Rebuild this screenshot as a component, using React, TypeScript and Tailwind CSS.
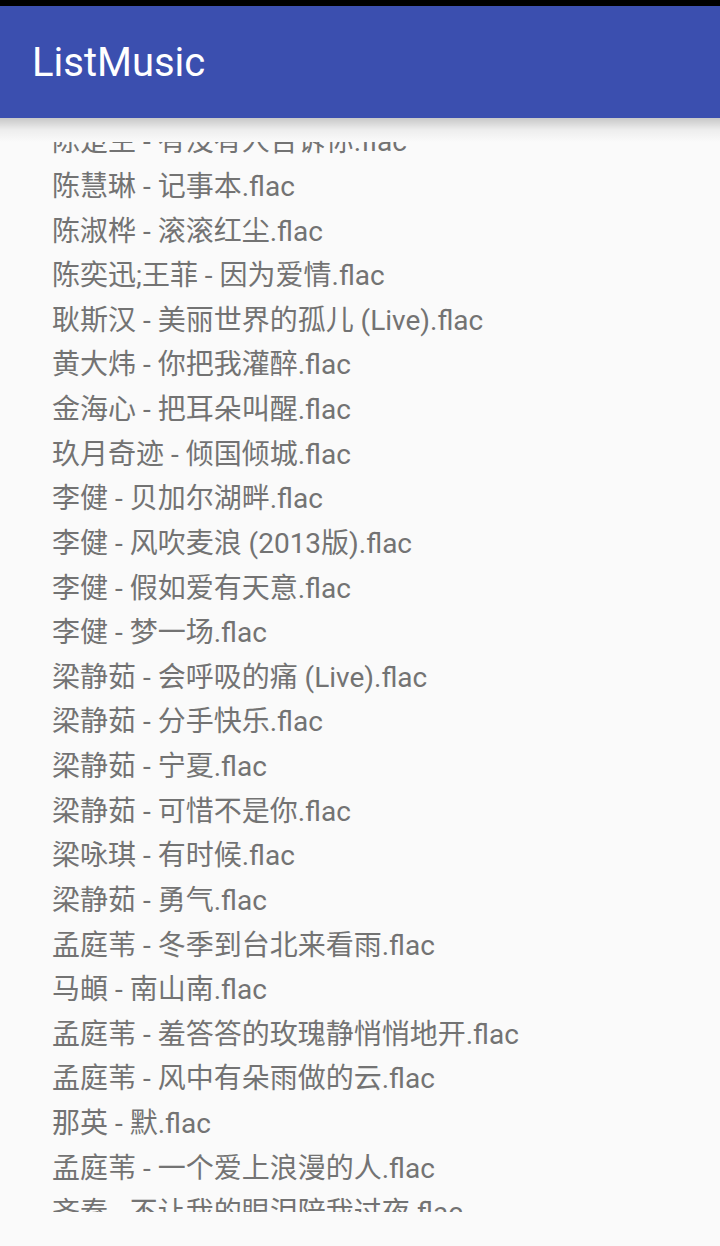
const songs = [
  "陈楚生 - 有没有人告诉你.flac",
  "陈慧琳 - 记事本.flac",
  "陈淑桦 - 滚滚红尘.flac",
  "陈奕迅;王菲 - 因为爱情.flac",
  "耿斯汉 - 美丽世界的孤儿 (Live).flac",
  "黄大炜 - 你把我灌醉.flac",
  "金海心 - 把耳朵叫醒.flac",
  "玖月奇迹 - 倾国倾城.flac",
  "李健 - 贝加尔湖畔.flac",
  "李健 - 风吹麦浪 (2013版).flac",
  "李健 - 假如爱有天意.flac",
  "李健 - 梦一场.flac",
  "梁静茹 - 会呼吸的痛 (Live).flac",
  "梁静茹 - 分手快乐.flac",
  "梁静茹 - 宁夏.flac",
  "梁静茹 - 可惜不是你.flac",
  "梁咏琪 - 有时候.flac",
  "梁静茹 - 勇气.flac",
  "孟庭苇 - 冬季到台北来看雨.flac",
  "马頔 - 南山南.flac",
  "孟庭苇 - 羞答答的玫瑰静悄悄地开.flac",
  "孟庭苇 - 风中有朵雨做的云.flac",
  "那英 - 默.flac",
  "孟庭苇 - 一个爱上浪漫的人.flac",
  "齐秦 - 不让我的眼泪陪我过夜.flac",
];

export default function App() {
  return (
    <div className="flex h-[1246px] w-[720px] flex-col bg-[#fafafa] font-['Roboto','Noto_Sans_CJK_SC',sans-serif]">
      {/* status bar */}
      <div className="h-[6px] shrink-0 bg-black" />

      {/* app bar */}
      <div className="relative z-10 flex h-[112px] shrink-0 items-center bg-[#3b4faf] pt-[2px] pl-[32px]">
        <h1 className="text-[40px] leading-none text-white">ListMusic</h1>
        <div className="absolute inset-x-0 top-full h-[24px] bg-gradient-to-b from-black/20 via-black/5 to-transparent" />
      </div>

      {/* song list */}
      <div className="flex min-h-0 flex-1 flex-col pt-[24px] pb-[34px]">
        <div className="flex-1 overflow-hidden">
          <ul className="-mt-[22px] pl-[52px]">
            {songs.map((song) => (
              <li
                key={song}
                className="flex h-[44.64px] items-center whitespace-nowrap text-[28px] leading-none text-[#737373]"
              >
                {song}
              </li>
            ))}
          </ul>
        </div>
      </div>
    </div>
  );
}
